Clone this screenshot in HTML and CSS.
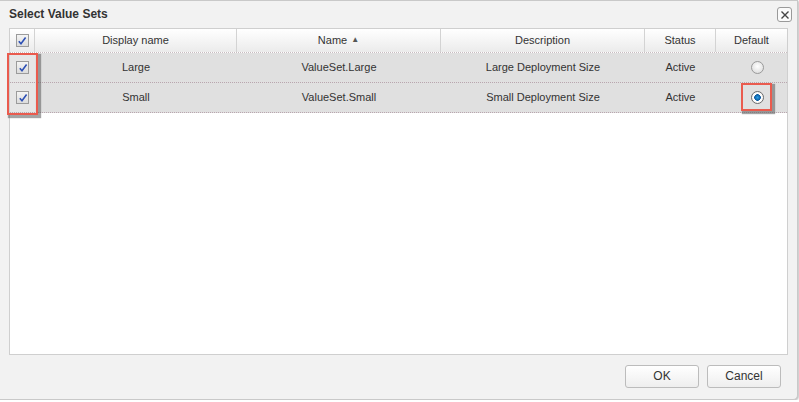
FILE: index.html
```html
<!DOCTYPE html>
<html>
<head>
<meta charset="utf-8">
<link rel="stylesheet" href="styles.css">
</head>
<body>
<div class="dialog">
  <div class="titlebar">
    <span class="title">Select Value Sets</span>
    <span class="close"><svg width="12" height="12" viewBox="0 0 12 12"><path d="M2.5 2.5 L9.5 9.5 M9.5 2.5 L2.5 9.5" stroke="#444" stroke-width="1.4" fill="none"/></svg></span>
  </div>
  <div class="grid">
    <div class="row head">
      <div class="cell cb"><span class="check"><svg width="10" height="10" viewBox="0 0 10 10"><path d="M1.8 5.2 L4 7.8 L8.6 1.6" stroke="#2c4fb5" stroke-width="1.6" fill="none"/></svg></span></div>
      <div class="cell txt">Display name</div>
      <div class="cell txt">Name <span class="sort">&#9650;</span></div>
      <div class="cell txt">Description</div>
      <div class="cell txt">Status</div>
      <div class="cell txt last">Default</div>
    </div>
    <div class="row data">
      <div class="cell cb"><span class="check"><svg width="10" height="10" viewBox="0 0 10 10"><path d="M1.8 5.2 L4 7.8 L8.6 1.6" stroke="#2c4fb5" stroke-width="1.6" fill="none"/></svg></span></div>
      <div class="cell txt">Large</div>
      <div class="cell txt">ValueSet.Large</div>
      <div class="cell txt">Large Deployment Size</div>
      <div class="cell txt">Active</div>
      <div class="cell last"><span class="radio"></span></div>
    </div>
    <div class="row data">
      <div class="cell cb"><span class="check"><svg width="10" height="10" viewBox="0 0 10 10"><path d="M1.8 5.2 L4 7.8 L8.6 1.6" stroke="#2c4fb5" stroke-width="1.6" fill="none"/></svg></span></div>
      <div class="cell txt">Small</div>
      <div class="cell txt">ValueSet.Small</div>
      <div class="cell txt">Small Deployment Size</div>
      <div class="cell txt">Active</div>
      <div class="cell last"><span class="radio on"></span></div>
    </div>
  </div>
  <div class="footer">
    <button class="btn">OK</button>
    <button class="btn">Cancel</button>
  </div>
  <div class="hl hl-checks"></div>
  <div class="hl hl-radio"></div>
</div>
</body>
</html>
```
FILE: styles.css
```css
html, body {
  margin: 0;
  padding: 0;
  background: #ffffff;
}
body {
  font-family: "Liberation Sans", Arial, sans-serif;
  font-size: 11px;
  color: #333;
}
.dialog {
  position: relative;
  box-sizing: border-box;
  width: 798px;
  height: 400px;
  background: #f2f2f2;
  border: 1px solid #c9c9c9;
  border-left: none;
  border-radius: 0 0 5px 0;
  box-shadow: 1px 1px 2px rgba(0,0,0,0.25);
  display: flex;
  flex-direction: column;
}
.titlebar {
  height: 27px;
  display: flex;
  align-items: center;
  justify-content: space-between;
  padding: 0 5px 0 9px;
}
.title {
  font-weight: bold;
  font-size: 12px;
  color: #333;
  margin-top: -1px;
}
.close {
  width: 13px;
  height: 13px;
  border: 1px solid #9a9a9a;
  border-radius: 3px;
  background: #fafafa;
  display: flex;
  align-items: center;
  justify-content: center;
}
.grid {
  margin: 0 9px 0 9px;
  height: 327px;
  box-sizing: border-box;
  background: #fff;
  border: 1px solid #cfcfcf;
}
.row {
  display: grid;
  grid-template-columns: 25px 202px 204px 204px 71px 1fr;
  box-sizing: border-box;
}
.cell {
  display: flex;
  align-items: center;
  justify-content: center;
  box-sizing: border-box;
}
.head {
  height: 24px;
  background: linear-gradient(#ffffff, #ebebeb);
  border-bottom: 1px dotted #c8bcc0;
}
.head .cell {
  border-right: 1px solid #d3d3d3;
  color: #333;
}
.head .txt { padding-bottom: 2px; }
.head .cell.last { border-right: none; }
.sort {
  font-size: 8px;
  color: #555;
  margin-left: 4px;
}
.data {
  height: 30px;
  background: #e0e0e0;
  border-bottom: 1px dotted #b9a6ae;
  color: #333;
}
.data .txt { padding-bottom: 1px; }
.data .cb { background: #e6e6e6; }
.check {
  width: 11px;
  height: 11px;
  border: 1px solid #9b9b9b;
  background: linear-gradient(#f4f4f4, #dcdcdc);
  display: flex;
  align-items: center;
  justify-content: center;
}
.radio {
  width: 13px;
  height: 13px;
  margin-left: 12px;
  border-radius: 50%;
  border: 1px solid #9a9a9a;
  background: radial-gradient(circle at 50% 40%, #ffffff, #d6d6d6);
  box-sizing: border-box;
}
.radio.on {
  background: radial-gradient(circle, #2aa0e8 0, #0b5aa0 3px, #ffffff 3.6px, #ececec 100%);
  border-color: #6b6b6b;
}
.footer {
  flex: 1;
  display: flex;
  justify-content: flex-end;
  align-items: center;
  gap: 8px;
  padding-right: 16px;
  padding-bottom: 2px;
}
.btn {
  width: 74px;
  height: 23px;
  font-family: "Liberation Sans", Arial, sans-serif;
  font-size: 12px;
  color: #333;
  border: 1px solid #bcbcbc;
  border-radius: 3px;
  background: linear-gradient(#ffffff, #eeeeee);
  padding: 0;
}
.hl {
  position: absolute;
  border: 2px solid #ea5b4e;
  box-shadow: 2px 2px 1px 1px rgba(90,90,90,0.55);
}
.hl-checks {
  left: 7px;
  top: 52px;
  width: 27px;
  height: 58px;
}
.hl-radio {
  left: 741px;
  top: 82px;
  width: 27px;
  height: 24px;
}
```
